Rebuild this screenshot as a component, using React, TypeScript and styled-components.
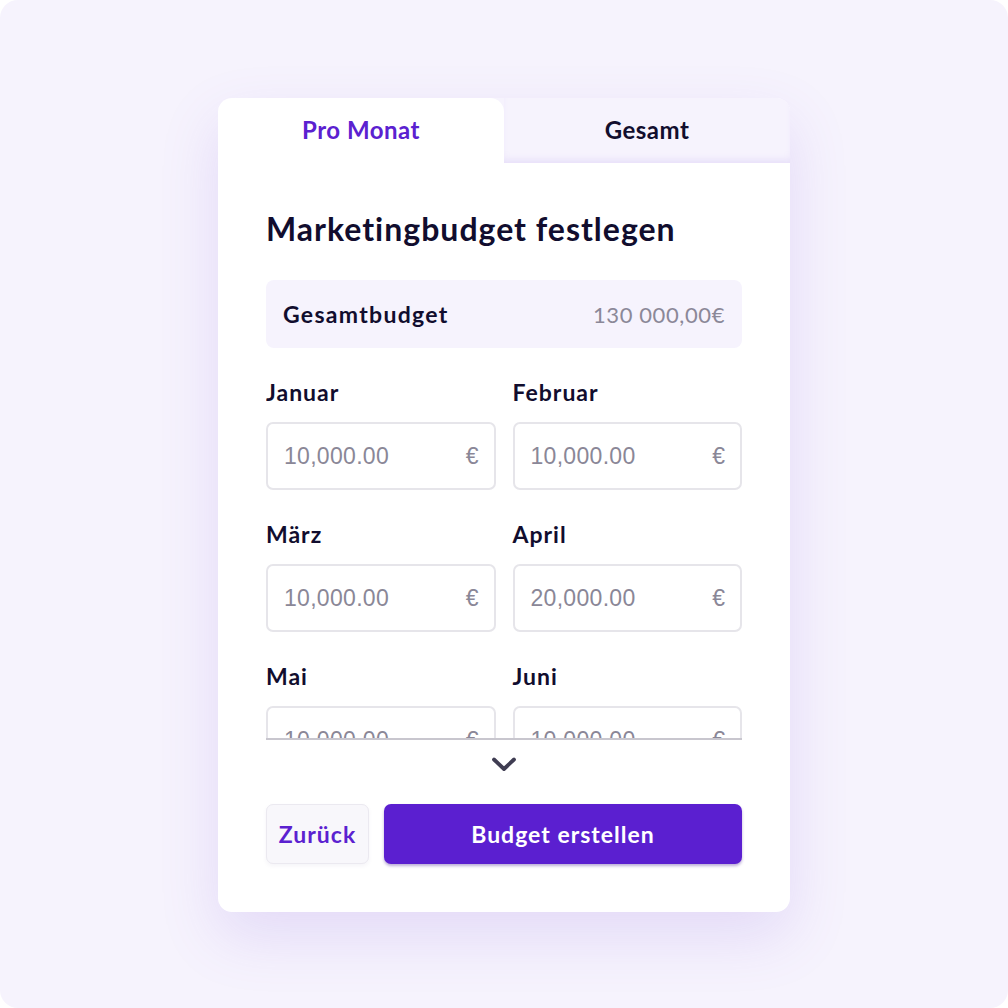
import React, { useState } from 'react';
import styled, { createGlobalStyle } from 'styled-components';

const GlobalStyle = createGlobalStyle`
	html, body {
		margin: 0;
		padding: 0;
		background: #ffffff;
	}
	body {
		font-family: Lato, "Noto Sans", sans-serif;
		-webkit-font-smoothing: antialiased;
	}
	* {
		box-sizing: border-box;
	}
`;

const Page = styled.div`
	width: 1008px;
	height: 1008px;
	border-radius: 18px;
	background: #f6f3fd;
	display: flex;
	align-items: center;
	justify-content: center;
`;

const Card = styled.div`
	width: 572px;
	background: #ffffff;
	border-radius: 14px;
	box-shadow: 0 24px 60px rgba(128, 90, 220, 0.16);
	overflow: hidden;
	margin-top: 2px;
`;

const Tabs = styled.div`
	display: grid;
	grid-template-columns: 1fr 1fr;
	height: 65px;
	background: #f6f3fd;
`;

const Tab = styled.button<{ $active: boolean }>`
	border: none;
	font-family: Lato, sans-serif;
	font-size: 24px;
	font-weight: 700;
	letter-spacing: 0.5px;
	cursor: pointer;
	padding: 0 0 2px;
	color: ${(p) => (p.$active ? '#5b21d0' : '#120e2e')};
	background: ${(p) => (p.$active ? '#ffffff' : '#f6f3fd')};
	border-radius: ${(p) => (p.$active ? '14px 14px 0 0' : '0')};
	box-shadow: ${(p) => (p.$active ? 'none' : 'inset 0 -6px 8px -4px rgba(150, 110, 230, 0.18)')};
`;

const Body = styled.div`
	padding: 48px 48px 48px;
`;

const Title = styled.h1`
	margin: 0;
	font-size: 32px;
	line-height: 36px;
	font-weight: 700;
	color: #110d2e;
	letter-spacing: 1px;
`;

const TotalBox = styled.div`
	margin-top: 33px;
	height: 68px;
	border-radius: 8px;
	background: #f6f3fd;
	display: flex;
	align-items: center;
	justify-content: space-between;
	padding: 0 17px;
`;

const TotalLabel = styled.span`
	font-size: 23px;
	font-weight: 700;
	letter-spacing: 1.3px;
	color: #110d2e;
`;

const TotalValue = styled.span`
	font-size: 22px;
	letter-spacing: 0.6px;
	color: #8b8898;
`;

const ScrollArea = styled.div`
	margin-top: 30px;
	height: 362px;
	overflow: hidden;
	border-bottom: 2px solid #c8c6ce;
`;

const MonthGrid = styled.div`
	display: grid;
	grid-template-columns: 1fr 1fr;
	column-gap: 17px;
	row-gap: 30px;
`;

const Field = styled.label`
	display: flex;
	flex-direction: column;
	gap: 16px;
`;

const FieldLabel = styled.span`
	font-size: 23px;
	line-height: 28px;
	font-weight: 700;
	letter-spacing: 1px;
	color: #110d2e;
`;

const InputBox = styled.div`
	height: 68px;
	border: 2px solid #e6e5ea;
	border-radius: 7px;
	display: flex;
	align-items: center;
	justify-content: space-between;
	padding: 0 15px 0 16px;
	font-family: "Liberation Sans", Arial, sans-serif;
	font-size: 23px;
	color: #8a8797;
`;

const Amount = styled.input`
	border: none;
	outline: none;
	background: transparent;
	font: inherit;
	letter-spacing: 0.3px;
	color: inherit;
	width: 150px;
	padding: 0;
`;

const Currency = styled.span`
	font-size: 23px;
`;

const MoreRow = styled.div`
	height: 64px;
	display: flex;
	justify-content: center;
	padding-top: 16px;
`;

const Actions = styled.div`
	display: flex;
	gap: 15px;
	height: 60px;
`;

const BackButton = styled.button`
	width: 103px;
	padding: 0;
	border: 1px solid #ebe9f0;
	background: #f8f7fb;
	border-radius: 7px;
	color: #5b21d0;
	font-family: Lato, sans-serif;
	font-size: 23px;
	font-weight: 700;
	letter-spacing: 1px;
	cursor: pointer;
	box-shadow: 0 2px 4px rgba(80, 60, 140, 0.06);
`;

const PrimaryButton = styled.button`
	flex: 1;
	border: none;
	background: #5b1fd0;
	border-radius: 7px;
	color: #ffffff;
	font-family: Lato, sans-serif;
	font-size: 23px;
	font-weight: 700;
	letter-spacing: 1px;
	cursor: pointer;
	box-shadow: 0 2px 3px rgba(60, 20, 140, 0.35);
`;

const months = [
	{ name: 'Januar', value: '10,000.00' },
	{ name: 'Februar', value: '10,000.00' },
	{ name: 'März', value: '10,000.00' },
	{ name: 'April', value: '20,000.00' },
	{ name: 'Mai', value: '10,000.00' },
	{ name: 'Juni', value: '10,000.00' },
	{ name: 'Juli', value: '10,000.00' },
	{ name: 'August', value: '10,000.00' }
];

const ChevronDown = () => (
	<svg width="26" height="18" viewBox="0 0 26 18" fill="none">
		<path d="M3 3.5 L13 13 L23 3.5" stroke="#3f3d52" strokeWidth="3.8" strokeLinecap="round" strokeLinejoin="round" />
	</svg>
);

export default function App() {
	const [tab, setTab] = useState<'month' | 'total'>('month');

	return (
		<>
			<GlobalStyle />
			<Page>
				<Card>
					<Tabs>
						<Tab $active={tab === 'month'} onClick={() => setTab('month')}>
							Pro Monat
						</Tab>
						<Tab $active={tab === 'total'} onClick={() => setTab('total')}>
							Gesamt
						</Tab>
					</Tabs>
					<Body>
						<Title>Marketingbudget festlegen</Title>
						<TotalBox>
							<TotalLabel>Gesamtbudget</TotalLabel>
							<TotalValue>130 000,00€</TotalValue>
						</TotalBox>
						<ScrollArea>
							<MonthGrid>
								{months.map((month) => (
									<Field key={month.name}>
										<FieldLabel>{month.name}</FieldLabel>
										<InputBox>
											<Amount defaultValue={month.value} />
											<Currency>€</Currency>
										</InputBox>
									</Field>
								))}
							</MonthGrid>
						</ScrollArea>
						<MoreRow>
							<ChevronDown />
						</MoreRow>
						<Actions>
							<BackButton>Zurück</BackButton>
							<PrimaryButton>Budget erstellen</PrimaryButton>
						</Actions>
					</Body>
				</Card>
			</Page>
		</>
	);
}
